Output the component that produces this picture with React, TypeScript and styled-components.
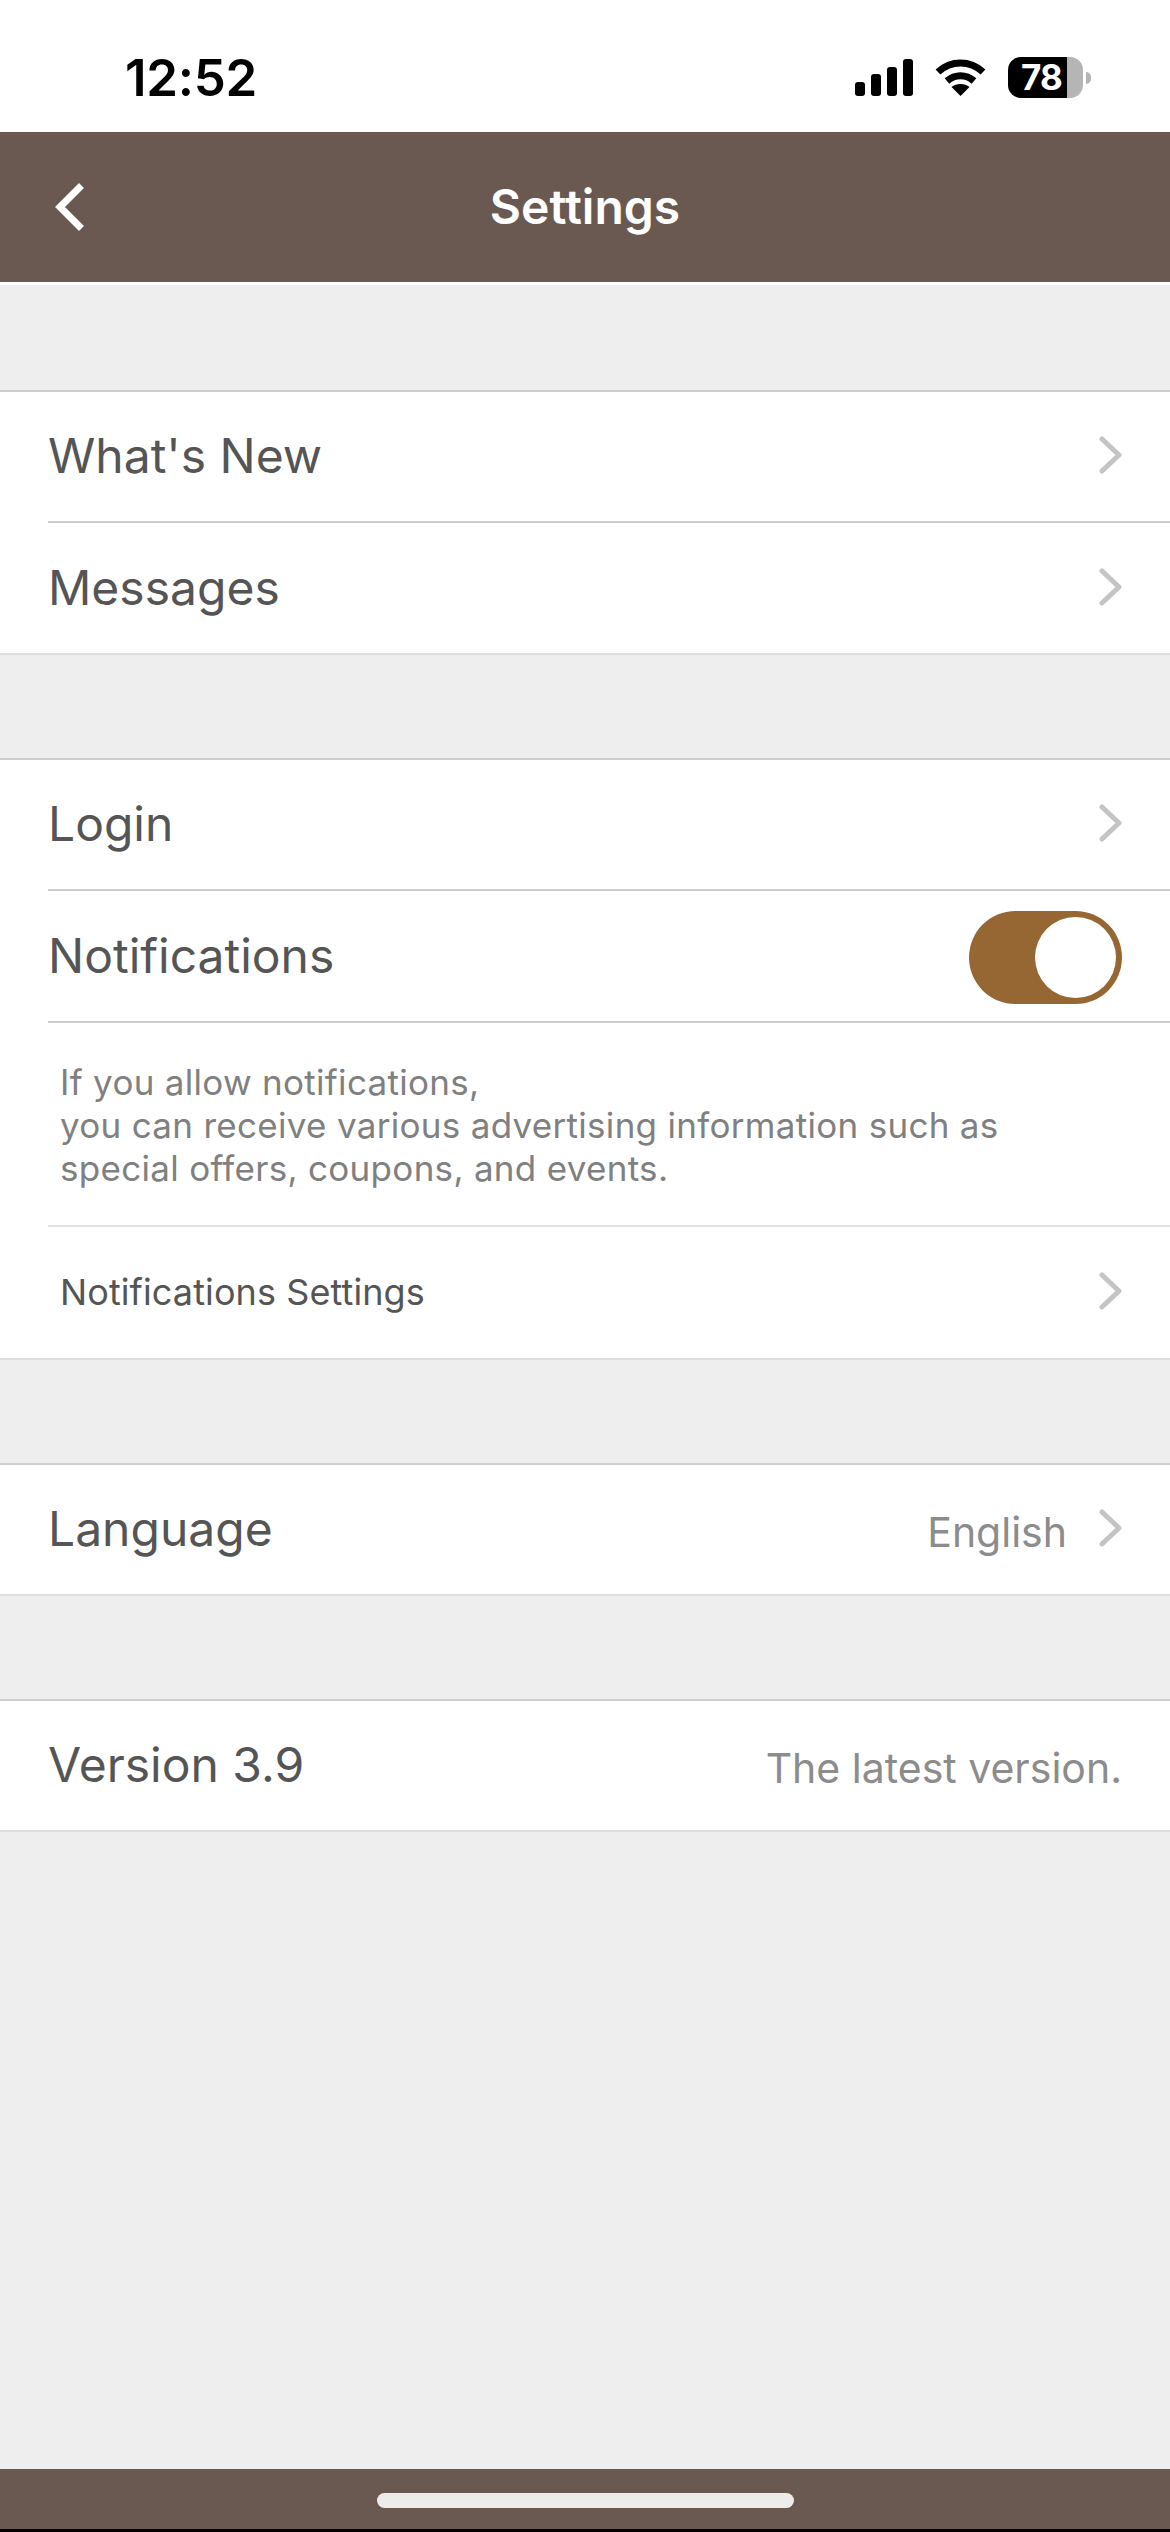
import { type FC, type ReactNode } from 'react'
import styled, { createGlobalStyle } from 'styled-components'

const GlobalStyle = createGlobalStyle`
  html, body {
    margin: 0;
    padding: 0;
    background: #000;
  }
  * {
    box-sizing: border-box;
  }
`

const fontStack = `Inter, "Liberation Sans", sans-serif`

const Screen = styled.div`
  width: 1170px;
  height: 2529px;
  display: flex;
  flex-direction: column;
  background: #eeeeee;
  font-family: ${fontStack};
`

const StatusBar = styled.div`
  height: 132px;
  background: #fff;
  display: flex;
  align-items: flex-start;
  justify-content: space-between;
  padding: 51px 79px 0 125px;
`

const Clock = styled.div`
  font-size: 51px;
  line-height: 54px;
  font-weight: 600;
  color: #000;
  letter-spacing: -0.3px;
`

const StatusIcons = styled.div`
  display: flex;
  align-items: flex-start;
  margin-top: 6px;
`

const Signal = styled.svg`
  width: 58px;
  height: 37px;
  margin-top: 2px;
`

const Wifi = styled.svg`
  width: 51px;
  height: 37px;
  margin: 2px 22px 0;
`

const Battery = styled.div`
  width: 75px;
  height: 41px;
  border-radius: 13px;
  background: linear-gradient(to right, #000 59px, #b5b5b5 59px);
  color: #fff;
  font-size: 35px;
  line-height: 41px;
  font-weight: 700;
  padding-left: 13px;
  letter-spacing: -0.8px;
`

const BatteryCap = styled.div`
  width: 5px;
  height: 12px;
  margin: 15px 0 0 3px;
  border-radius: 0 6px 6px 0;
  background: #b5b5b5;
`

const NavBar = styled.div`
  position: relative;
  height: 150px;
  flex-shrink: 0;
  background: #695950;
  display: flex;
  align-items: center;
  justify-content: center;
`

const BackIcon = styled.svg`
  position: absolute;
  left: 53px;
  top: 50px;
  width: 32px;
  height: 50px;
`

const NavTitle = styled.div`
  color: #fff;
  font-size: 48px;
  font-weight: 600;
  margin-top: -2px;
`

const NavGap = styled.div`
  height: 3px;
  background: #fff;
`

const Content = styled.div`
  display: flex;
  flex-direction: column;
  flex: 1;
  padding-top: 105px;
  gap: 103px;
`

const Section = styled.section`
  background: #fff;
  border-top: 2px solid #cdcdcd;
  border-bottom: 2px solid #dedede;
`

const Row = styled.div`
  display: flex;
  align-items: center;
  justify-content: space-between;
  height: 129px;
  padding-right: 48px;
  margin-left: 48px;

  & + & {
    height: 132px;
    border-top: 2px solid #cdcdcd;
  }
`

const Title = styled.div`
  font-size: 48px;
  color: #555555;
  margin-top: -2px;
`

const Value = styled.div`
  font-size: 41px;
  color: #8c8c8c;
  margin-top: 5px;
`

const RowEnd = styled.div`
  display: flex;
  align-items: center;
  gap: 32px;
`

const Chevron = styled.svg`
  width: 23px;
  height: 38px;
  display: block;
  margin-top: -3px;
`

const Toggle = styled.div`
  width: 153px;
  height: 93px;
  margin-top: 2px;
  border-radius: 47px;
  background: #966633;
  display: flex;
  align-items: center;
  justify-content: flex-end;
  padding-right: 6px;
`

const Knob = styled.div`
  width: 81px;
  height: 81px;
  border-radius: 50%;
  background: #fff;
`

const Note = styled.p`
  margin: 0 0 0 48px;
  padding: 38px 0 35px 12px;
  border-top: 2px solid #cdcdcd;
  font-size: 35px;
  line-height: 43px;
  letter-spacing: 0.3px;
  color: #808080;
  white-space: pre-line;
`

const SubRow = styled.div`
  display: flex;
  align-items: center;
  justify-content: space-between;
  height: 133px;
  margin-left: 48px;
  padding: 0 48px 0 12px;
  border-top: 2px solid #e2e2e2;
`

const SubTitle = styled.div`
  font-size: 36px;
  color: #555555;
  letter-spacing: 0.1px;
  margin-top: -2px;
`

const BottomBar = styled.div`
  height: 60px;
  flex-shrink: 0;
  background: #695950;
  display: flex;
  justify-content: center;
  padding-top: 24px;
`

const HomeIndicator = styled.div`
  width: 417px;
  height: 15px;
  border-radius: 8px;
  background: #eeecea;
`

const RowChevron: FC = () => (
  <Chevron viewBox="0 0 23 38" fill="none" stroke="#c4c4c4" strokeWidth="5" strokeLinecap="round" strokeLinejoin="round">
    <path d="M3 3 L20 19 L3 35" />
  </Chevron>
)

const SettingRow: FC<{ title: string; children?: ReactNode }> = ({ title, children }) => (
  <Row>
    <Title>{title}</Title>
    {children}
  </Row>
)

export default function App() {
  return (
    <>
      <GlobalStyle />
      <Screen>
        <StatusBar>
          <Clock>12:52</Clock>
          <StatusIcons>
            <Signal viewBox="0 0 58 37" fill="#000">
              <rect x="0" y="23" width="10" height="14" rx="3" />
              <rect x="16" y="15" width="10" height="22" rx="3" />
              <rect x="32" y="8" width="10" height="29" rx="3" />
              <rect x="48" y="0" width="10" height="37" rx="3" />
            </Signal>
            <Wifi viewBox="0 0 51 37" fill="none" stroke="#000" strokeWidth="7">
              <path d="M3 13 C16 1 35 1 48 13" />
              <path d="M12 22 C20 15 31 15 39 22" />
              <path d="M25.5 37 L16.5 28 C21 24 30 24 34.5 28 Z" fill="#000" stroke="none" />
            </Wifi>
            <Battery>78</Battery>
            <BatteryCap />
          </StatusIcons>
        </StatusBar>
        <NavBar>
          <BackIcon viewBox="0 0 32 50" fill="none" stroke="#fff" strokeWidth="7" strokeLinecap="square">
            <path d="M26 6 L7 25 L26 44" />
          </BackIcon>
          <NavTitle>Settings</NavTitle>
        </NavBar>
        <NavGap />
        <Content>
          <Section>
            <SettingRow title="What's New">
              <RowChevron />
            </SettingRow>
            <SettingRow title="Messages">
              <RowChevron />
            </SettingRow>
          </Section>
          <Section>
            <SettingRow title="Login">
              <RowChevron />
            </SettingRow>
            <SettingRow title="Notifications">
              <Toggle>
                <Knob />
              </Toggle>
            </SettingRow>
            <Note>
              {'If you allow notifications,\nyou can receive various advertising information such as\nspecial offers, coupons, and events.'}
            </Note>
            <SubRow>
              <SubTitle>Notifications Settings</SubTitle>
              <RowChevron />
            </SubRow>
          </Section>
          <Section>
            <SettingRow title="Language">
              <RowEnd>
                <Value>English</Value>
                <RowChevron />
              </RowEnd>
            </SettingRow>
          </Section>
          <Section>
            <SettingRow title="Version 3.9">
              <Value>The latest version.</Value>
            </SettingRow>
          </Section>
        </Content>
        <BottomBar>
          <HomeIndicator />
        </BottomBar>
      </Screen>
    </>
  )
}
